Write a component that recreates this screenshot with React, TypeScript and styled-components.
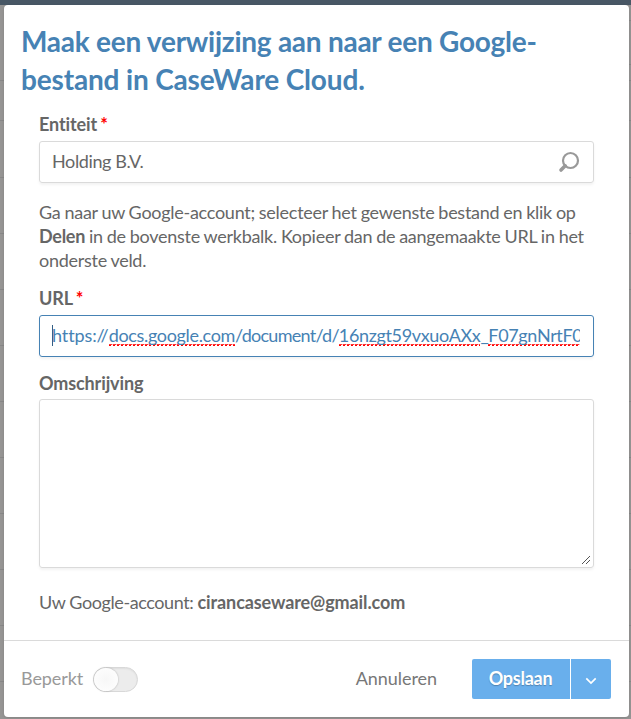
import React from "react";
import styled, { createGlobalStyle } from "styled-components";

const GlobalStyle = createGlobalStyle`
  * { box-sizing: border-box; }
  body {
    margin: 0;
    overflow: hidden;
    font-family: Lato, "Liberation Sans", sans-serif;
    font-size: 18px;
    color: #666;
  }
`;

const Page = styled.div`
  position: relative;
  width: 631px;
  height: 719px;
  overflow: hidden;
  background: #969594;
`;

const TopBar = styled.div`
  height: 5px;
  background: #485765;
`;

const ListRow = styled.div<{ $height: number; $inset?: boolean }>`
  height: ${(p) => p.$height}px;
  margin-left: ${(p) => (p.$inset ? 5 : 0)}px;
  border-bottom: 1px solid #888;
`;

const Dialog = styled.section`
  position: absolute;
  top: 5px;
  left: 4px;
  width: 625px;
  height: 712px;
  display: flex;
  flex-direction: column;
  background: #fff;
  border-radius: 4px;
  box-shadow: 0 1px 3px rgba(0, 0, 0, 0.12);
`;

const Title = styled.h1`
  margin: 0;
  padding: 17px 60px 0 17px;
  font-size: 28px;
  line-height: 38px;
  font-weight: 700;
  letter-spacing: -0.25px;
  color: #4682b4;
  white-space: nowrap;
`;

const TitleEnd = styled.span`
  letter-spacing: -0.16px;
`;

const Form = styled.div`
  flex: 1;
  display: flex;
  flex-direction: column;
  padding: 14px 35px 0;
`;

const Label = styled.label<{ $top?: number }>`
  display: block;
  margin-top: ${(p) => p.$top ?? 0}px;
  height: 29px;
  line-height: 24px;
  font-weight: 700;
  letter-spacing: -0.12px;
`;

const Required = styled.span`
  margin-left: -1px;
  color: #f00;
`;

const Field = styled.div<{ $active?: boolean }>`
  display: flex;
  align-items: center;
  justify-content: space-between;
  height: 42px;
  padding: 0 13px 0 12px;
  border: 1px solid ${(p) => (p.$active ? "#4682b4" : "#dadada")};
  border-radius: 3px;
  color: ${(p) => (p.$active ? "#4682b4" : "#666")};
  box-shadow: 0 2px 3px rgba(0, 0, 0, 0.05);
`;

const FieldValue = styled.span`
  padding-bottom: 2px;
  letter-spacing: -0.38px;
`;

const UrlText = styled.div`
  flex: 1;
  height: 26px;
  line-height: 24px;
  overflow: hidden;
  white-space: nowrap;
`;

const Caret = styled.span`
  display: inline-block;
  width: 1px;
  height: 21px;
  margin-right: -1px;
  vertical-align: -4px;
  background: #335f84;
`;

const UrlPart = styled.span<{ $spacing: number }>`
  letter-spacing: ${(p) => p.$spacing}px;
`;

const Misspelled = styled(UrlPart)`
  background:
    repeating-linear-gradient(90deg, #f00 0 2px, transparent 2px 4px) 0 100% / 100% 1px no-repeat,
    repeating-linear-gradient(90deg, #f33 0 3px, #fbb 3px 4px) 0 calc(100% - 1px) / 100% 1px no-repeat;
`;

const Help = styled.p`
  margin: 17px 0 0;
  line-height: 24px;
  letter-spacing: -0.27px;
  word-spacing: -0.4px;
  white-space: nowrap;
`;

const Description = styled.div`
  display: flex;
  align-items: flex-end;
  justify-content: flex-end;
  height: 169px;
  margin-top: -1px;
  padding: 2px;
  border: 1px solid #dadada;
  border-radius: 3px;
  box-shadow: 0 2px 3px rgba(0, 0, 0, 0.05);
`;

const Account = styled.p`
  margin: 22px 0 0;
  line-height: 24px;
  letter-spacing: -0.41px;

  b {
    letter-spacing: -0.1px;
  }
`;

const Footer = styled.footer`
  display: flex;
  align-items: center;
  height: 77px;
  padding: 0 18px 0 17px;
  border-top: 1px solid #dadada;
`;

const ToggleLabel = styled.span`
  padding-bottom: 2px;
  letter-spacing: -0.1px;
  color: #999;
`;

const Toggle = styled.div`
  width: 45px;
  height: 25px;
  margin-left: 10px;
  border: 1px solid #d8d8d8;
  border-radius: 13px;
  background: #ececec;
  box-shadow: inset 0 1px 2px rgba(0, 0, 0, 0.06);
`;

const Knob = styled.div`
  width: 24px;
  height: 23px;
  border-radius: 50%;
  background: radial-gradient(#f7f7f7, #fff);
  box-shadow: 0 0 2px rgba(0, 0, 0, 0.3);
`;

const Cancel = styled.button`
  margin: 0 35px 0 auto;
  padding: 0 0 2px;
  border: 0;
  background: none;
  font: inherit;
  letter-spacing: -0.05px;
  color: #777;
`;

const SplitButton = styled.div`
  display: flex;
  gap: 1px;
  width: 139px;
  height: 40px;
`;

const Action = styled.button<{ $width: number; $side: "left" | "right" }>`
  display: flex;
  align-items: center;
  justify-content: center;
  width: ${(p) => p.$width}px;
  padding: ${(p) => (p.$side === "left" ? "0 1px 2px 0" : "3px 0 0")};
  border: 0;
  border-radius: ${(p) => (p.$side === "left" ? "2px 0 0 2px" : "0 2px 2px 0")};
  background: #69afec;
  color: #fff;
  font: inherit;
  font-weight: 700;
  letter-spacing: -0.25px;
  text-shadow: 0 1px 1px rgba(0, 0, 0, 0.25);
`;

const rows = [
  { height: 16, inset: true },
  { height: 44, inset: true },
  { height: 16 },
  { height: 40 },
  { height: 57 },
  ...Array.from({ length: 9 }, () => ({ height: 56 })),
] as { height: number; inset?: boolean }[];

export default function App() {
  return (
    <Page>
      <GlobalStyle />
      <TopBar />
      {rows.map((row, i) => (
        <ListRow key={i} $height={row.height} $inset={row.inset} />
      ))}
      <Dialog>
        <Title>
          Maak een verwijzing aan naar een Google-
          <br />
          <TitleEnd>bestand in CaseWare Cloud.</TitleEnd>
        </Title>
        <Form>
          <Label>
            Entiteit <Required>*</Required>
          </Label>
          <Field>
            <FieldValue>Holding B.V.</FieldValue>
            <svg width="22" height="22" viewBox="0 0 22 22" fill="none" stroke="#999">
              <circle cx="12.5" cy="9.5" r="7.5" strokeWidth="2.2" />
              <path d="M7.2 14.8L3 19" strokeWidth="3.6" strokeLinecap="round" />
            </svg>
          </Field>
          <Help>
            Ga naar uw Google-account; selecteer het gewenste bestand en klik op
            <br />
            <b>Delen</b> in de bovenste werkbalk. Kopieer dan de aangemaakte URL in het
            <br />
            onderste veld.
          </Help>
          <Label $top={14}>
            URL <Required>*</Required>
          </Label>
          <Field $active>
            <UrlText>
              <Caret />
              <UrlPart $spacing={-0.1}>https://</UrlPart>
              <Misspelled $spacing={-0.33}>docs.google.com</Misspelled>
              <UrlPart $spacing={-0.72}>/document/d/</UrlPart>
              <Misspelled $spacing={-0.35}>16nzgt59vxuoAXx</Misspelled>
              <UrlPart $spacing={-0.35}>_</UrlPart>
              <Misspelled $spacing={-0.35}>F07gnNrtF0</Misspelled>
            </UrlText>
          </Field>
          <Label $top={14}>Omschrijving</Label>
          <Description>
            <svg width="10" height="10" viewBox="0 0 10 10" stroke="#555" fill="none">
              <path d="M1 9L9 1M5 9L9 5" />
            </svg>
          </Description>
          <Account>
            Uw Google-account: <b>cirancaseware@gmail.com</b>
          </Account>
        </Form>
        <Footer>
          <ToggleLabel>Beperkt</ToggleLabel>
          <Toggle>
            <Knob />
          </Toggle>
          <Cancel>Annuleren</Cancel>
          <SplitButton>
            <Action $width={98} $side="left">Opslaan</Action>
            <Action $width={40} $side="right" aria-label="Meer opties">
              <svg width="12" height="8" viewBox="0 0 12 8" fill="none" stroke="#fff" strokeWidth="1.7">
                <path d="M1.3 1.3L6 6L10.7 1.3" />
              </svg>
            </Action>
          </SplitButton>
        </Footer>
      </Dialog>
    </Page>
  );
}
